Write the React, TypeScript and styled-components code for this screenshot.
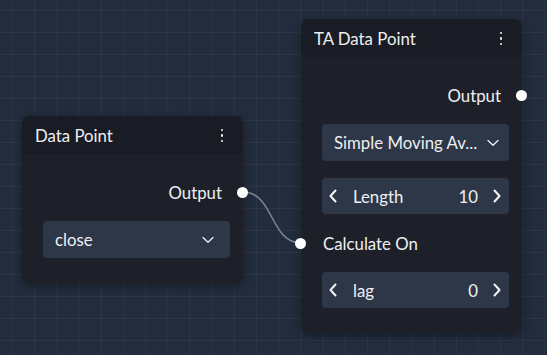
import React from "react";
import styled, { createGlobalStyle } from "styled-components";

const Global = createGlobalStyle`
  html, body { margin: 0; padding: 0; }
  body { background: #222c3c; font-family: Lato, "Noto Sans", sans-serif; }
`;

const Canvas = styled.div`
  position: relative;
  width: 547px;
  height: 355px;
  overflow: hidden;
  background-color: #222c3c;
  background-image:
    linear-gradient(to right, rgba(255,255,255,0.045) 1px, transparent 1px),
    linear-gradient(to bottom, rgba(255,255,255,0.045) 1px, transparent 1px);
  background-size: 22.2px 22px;
  background-position: 12px 10px;
`;

const Node = styled.div<{ $x: number; $y: number }>`
  position: absolute;
  left: ${(p) => p.$x}px;
  top: ${(p) => p.$y}px;
  width: 221px;
  border-radius: 8px;
  background: #1d2029;
  box-shadow: 0 3px 10px rgba(0, 0, 0, 0.35);
  color: #eeeff1;
  font-size: 16.8px;
`;

const Header = styled.div`
  height: 38px;
  display: flex;
  align-items: center;
  justify-content: space-between;
  padding: 0 20px 0 13px;
  background: #191c24;
  border-radius: 8px 8px 0 0;
  font-size: 16.8px;
`;

const Title = styled.span`
  letter-spacing: 0;
`;

const Kebab = styled.span`
  display: flex;
  flex-direction: column;
  gap: 3px;
  align-items: center;
  margin-top: 1px;
  & > i {
    display: block;
    width: 2.4px;
    height: 2.4px;
    border-radius: 50%;
    background: #f2f2f2;
  }
`;

const Body = styled.div`
  display: flex;
  flex-direction: column;
  gap: 17px;
  padding: 26px 13px 25px 21px;
`;

const PortRow = styled.div<{ $side: "left" | "right" }>`
  position: relative;
  height: 24px;
  display: flex;
  align-items: center;
  justify-content: ${(p) => (p.$side === "right" ? "flex-end" : "flex-start")};
  padding-right: ${(p) => (p.$side === "right" ? 8 : 0)}px;
  padding-left: 1px;
`;

const Port = styled.span<{ $side: "left" | "right" }>`
  position: absolute;
  top: 50%;
  ${(p) => (p.$side === "right" ? "right: -18px;" : "left: -27px;")}
  width: 11px;
  height: 11px;
  margin-top: -5px;
  border-radius: 50%;
  background: #ffffff;
`;

const Select = styled.div<{ $padRight: number }>`
  height: 37px;
  display: flex;
  align-items: center;
  gap: 5px;
  padding: 0 ${(p) => p.$padRight}px 0 12px;
  background: #2d3748;
  border-radius: 4px;
  box-sizing: border-box;
`;

const SelectText = styled.span`
  flex: 1;
  white-space: nowrap;
  overflow: hidden;
`;

const Stepper = styled.div`
  height: 36px;
  display: flex;
  align-items: center;
  padding: 0 8px 0 7px;
  background: #2d3748;
  border-radius: 4px;
  box-sizing: border-box;
`;

const StepLabel = styled.span`
  flex: 1;
  padding-left: 16px;
`;

const StepValue = styled.span`
  margin-right: 15px;
`;

const EdgeLayer = styled.svg`
  position: absolute;
  left: 0;
  top: 0;
  pointer-events: none;
`;

const ChevronDown = () => (
  <svg width="12" height="8" viewBox="0 0 12 8" fill="none">
    <path d="M1 1.5 L6 6.2 L11 1.5" stroke="#f0f0f0" strokeWidth="1.3" strokeLinecap="round" strokeLinejoin="round" />
  </svg>
);

const Chevron = ({ dir }: { dir: "left" | "right" }) => (
  <svg width="8" height="14" viewBox="0 0 8 14" fill="none">
    <path
      d={dir === "left" ? "M6.5 1.5 L1.5 7 L6.5 12.5" : "M1.5 1.5 L6.5 7 L1.5 12.5"}
      stroke="#f4f4f4"
      strokeWidth="2"
      strokeLinecap="round"
      strokeLinejoin="round"
    />
  </svg>
);

const Dots = () => (
  <Kebab>
    <i />
    <i />
    <i />
  </Kebab>
);

const NumberStepper = ({ label, value }: { label: string; value: number }) => (
  <Stepper>
    <Chevron dir="left" />
    <StepLabel>{label}</StepLabel>
    <StepValue>{value}</StepValue>
    <Chevron dir="right" />
  </Stepper>
);

export default function App() {
  return (
    <>
      <Global />
      <Canvas>
        <EdgeLayer width="547" height="355">
          <path d="M243 192 C 274 192, 270 243, 301 243" stroke="#7f889a" strokeWidth="1.5" fill="none" />
        </EdgeLayer>

        <Node $x={22} $y={116}>
          <Header>
            <Title>Data Point</Title>
            <Dots />
          </Header>
          <Body>
            <PortRow $side="right">
              Output
              <Port $side="right" />
            </PortRow>
            <Select $padRight={16}>
              <SelectText>close</SelectText>
              <ChevronDown />
            </Select>
          </Body>
        </Node>

        <Node $x={301} $y={19}>
          <Header>
            <Title>TA Data Point</Title>
            <Dots />
          </Header>
          <Body>
            <PortRow $side="right">
              Output
              <Port $side="right" />
            </PortRow>
            <Select $padRight={10}>
              <SelectText>Simple Moving Av...</SelectText>
              <ChevronDown />
            </Select>
            <NumberStepper label="Length" value={10} />
            <PortRow $side="left">
              Calculate On
              <Port $side="left" />
            </PortRow>
            <NumberStepper label="lag" value={0} />
          </Body>
        </Node>
      </Canvas>
    </>
  );
}
